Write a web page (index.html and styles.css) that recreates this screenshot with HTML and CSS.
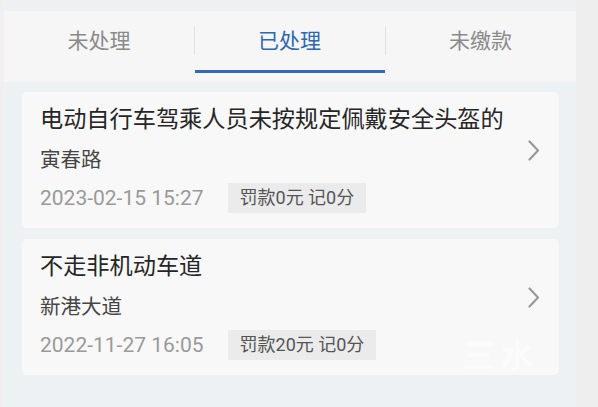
FILE: index.html
```html
<!DOCTYPE html>
<html lang="zh-CN">
<head>
<meta charset="utf-8">
<link rel="stylesheet" href="styles.css">
</head>
<body>
<div class="page">
  <div class="tabs">
    <div class="tab">未处理</div>
    <div class="tab active">已处理</div>
    <div class="tab">未缴款</div>
  </div>
  <div class="list">
    <div class="card">
      <div class="info">
        <div class="title">电动自行车驾乘人员未按规定佩戴安全头盔的</div>
        <div class="place">寅春路</div>
        <div class="meta">
          <span class="time">2023-02-15 15:27</span>
          <span class="badge">罚款0元 记0分</span>
        </div>
      </div>
      <svg class="chev" width="12" height="21" viewBox="0 0 12 21"><path d="M1.5 1.5 L10 10.5 L1.5 19.5" fill="none" stroke="#9a9a9a" stroke-width="2.2" stroke-linecap="round" stroke-linejoin="round"/></svg>
    </div>
    <div class="card">
      <div class="info">
        <div class="title">不走非机动车道</div>
        <div class="place">新港大道</div>
        <div class="meta">
          <span class="time">2022-11-27 16:05</span>
          <span class="badge">罚款20元 记0分</span>
        </div>
      </div>
      <svg class="chev" width="12" height="21" viewBox="0 0 12 21"><path d="M1.5 1.5 L10 10.5 L1.5 19.5" fill="none" stroke="#9a9a9a" stroke-width="2.2" stroke-linecap="round" stroke-linejoin="round"/></svg>
      <div class="mark">三水</div>
    </div>
  </div>
</div>
</body>
</html>
```

FILE: styles.css
```css
html, body {
  margin: 0;
  padding: 0;
}
body {
  background: #eeeeee;
  font-family: Roboto, "Noto Sans CJK SC", sans-serif;
  width: 598px;
  height: 407px;
  overflow: hidden;
}
.page {
  width: 572px;
  height: 407px;
  margin-left: 4px;
  background: #eef1f4;
  padding-top: 11px;
  box-sizing: border-box;
  box-shadow: -4px 0 0 #f0eeee;
}
.tabs {
  display: grid;
  grid-template-columns: 190px 191px 191px;
  height: 71px;
  background: #f6f6f6;
}
.tab {
  position: relative;
  text-align: center;
  font-size: 21px;
  color: #8a8a8a;
  line-height: 30px;
  padding-top: 15px;
}
.tab + .tab::before {
  content: "";
  position: absolute;
  left: 0;
  top: 15px;
  height: 29px;
  width: 1px;
  background: #e2e2e2;
}
.tab.active {
  color: #2d68b0;
}
.tab.active::after {
  content: "";
  position: absolute;
  left: 1px;
  right: 0;
  top: 59px;
  height: 3px;
  background: #2f6ab2;
}
.list {
  display: flex;
  flex-direction: column;
  gap: 11px;
  padding: 10px 17px 0 18px;
}
.card {
  position: relative;
  overflow: hidden;
  display: flex;
  align-items: center;
  background: #f8f8f8;
  border-radius: 5px;
  padding: 12px 19px 15px 18px;
}
.info {
  flex: 1;
}
.title {
  font-size: 23.2px;
  line-height: 30px;
  color: #262626;
}
.place {
  margin-top: 12px;
  font-size: 20.5px;
  line-height: 28px;
  color: #454545;
}
.meta {
  margin-top: 9px;
  display: flex;
  align-items: center;
  gap: 24px;
}
.time {
  font-size: 21px;
  color: #9a9a9a;
  line-height: 30px;
}
.badge {
  background: #ebebeb;
  color: #555;
  font-size: 18px;
  line-height: 30px;
  padding: 0 12px;
}
.chev {
  display: block;
  margin-bottom: 16px;
}
.mark {
  position: absolute;
  left: 440px;
  top: 90px;
  font-size: 34px;
  font-weight: 700;
  color: #fbfbfb;
  letter-spacing: 4px;
  white-space: nowrap;
}
```
